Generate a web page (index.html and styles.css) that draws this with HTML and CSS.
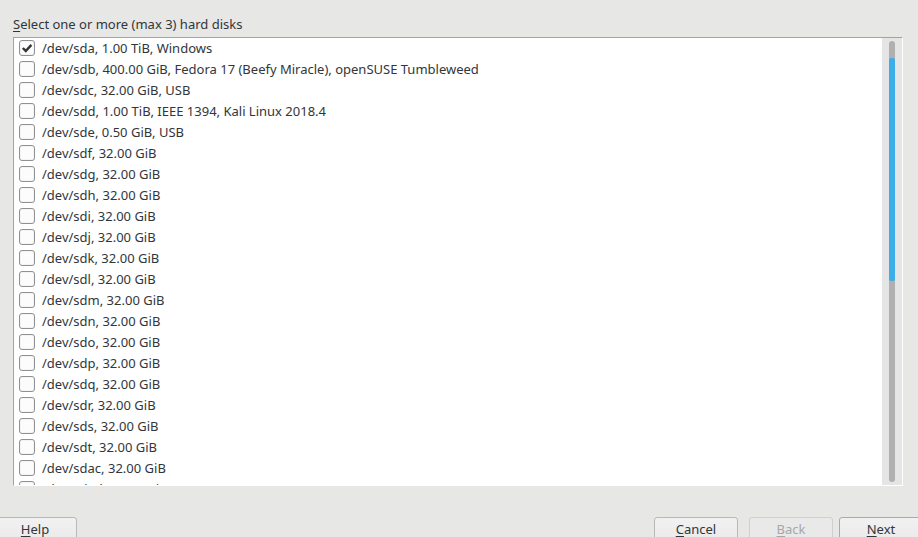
FILE: index.html
```html
<!DOCTYPE html>
<html>
<head>
<meta charset="utf-8">
<link rel="stylesheet" href="styles.css">
</head>
<body>
<div class="page">
  <div class="label"><u>S</u>elect one or more (max 3) hard disks</div>
  <div class="listbox">
    <div class="list">
      <div class="row"><span class="cb checked"><svg viewBox="0 0 16 16" width="16" height="16"><path d="M3.2 8.0 L6.6 11.4 L13 4.4" fill="none" stroke="#31363b" stroke-width="2.8"/></svg></span>/dev/sda, 1.00 TiB, Windows</div>
      <div class="row"><span class="cb"></span>/dev/sdb, 400.00 GiB, Fedora 17 (Beefy Miracle), openSUSE Tumbleweed</div>
      <div class="row"><span class="cb"></span>/dev/sdc, 32.00 GiB, USB</div>
      <div class="row"><span class="cb"></span>/dev/sdd, 1.00 TiB, IEEE 1394, Kali Linux 2018.4</div>
      <div class="row"><span class="cb"></span>/dev/sde, 0.50 GiB, USB</div>
      <div class="row"><span class="cb"></span>/dev/sdf, 32.00 GiB</div>
      <div class="row"><span class="cb"></span>/dev/sdg, 32.00 GiB</div>
      <div class="row"><span class="cb"></span>/dev/sdh, 32.00 GiB</div>
      <div class="row"><span class="cb"></span>/dev/sdi, 32.00 GiB</div>
      <div class="row"><span class="cb"></span>/dev/sdj, 32.00 GiB</div>
      <div class="row"><span class="cb"></span>/dev/sdk, 32.00 GiB</div>
      <div class="row"><span class="cb"></span>/dev/sdl, 32.00 GiB</div>
      <div class="row"><span class="cb"></span>/dev/sdm, 32.00 GiB</div>
      <div class="row"><span class="cb"></span>/dev/sdn, 32.00 GiB</div>
      <div class="row"><span class="cb"></span>/dev/sdo, 32.00 GiB</div>
      <div class="row"><span class="cb"></span>/dev/sdp, 32.00 GiB</div>
      <div class="row"><span class="cb"></span>/dev/sdq, 32.00 GiB</div>
      <div class="row"><span class="cb"></span>/dev/sdr, 32.00 GiB</div>
      <div class="row"><span class="cb"></span>/dev/sds, 32.00 GiB</div>
      <div class="row"><span class="cb"></span>/dev/sdt, 32.00 GiB</div>
      <div class="row"><span class="cb"></span>/dev/sdac, 32.00 GiB</div>
      <div class="row"><span class="cb"></span>/dev/sdad, 32.00 GiB</div>
    </div>
    <div class="scrollbar">
      <div class="track">
        <div class="handle"></div>
      </div>
    </div>
  </div>
  <div class="buttons">
    <button class="btn help"><u>H</u>elp</button>
    <div class="spacer"></div>
    <button class="btn cancel"><u>C</u>ancel</button>
    <button class="btn back" disabled><u>B</u>ack</button>
    <button class="btn next"><u>N</u>ext</button>
  </div>
</div>
</body>
</html>
```
FILE: styles.css
```css
html, body {
  margin: 0;
  padding: 0;
  background: #e7e7e6;
  overflow: hidden;
}
body {
  width: 918px;
  height: 537px;
  font-family: "Noto Sans", "DejaVu Sans", sans-serif;
  font-size: 13px;
  color: #31363b;
}
.page {
  display: flex;
  flex-direction: column;
  height: 537px;
  padding: 14px 0 0 13px;
  box-sizing: border-box;
  overflow: hidden;
}
.label {
  height: 20px;
  line-height: 20px;
  margin-bottom: 3px;
  flex: none;
}
.label u {
  text-decoration-thickness: 1px;
  text-underline-offset: 2px;
}
.listbox {
  width: 890px;
  height: 449px;
  flex: none;
  box-sizing: border-box;
  border-top: 1px solid #a3a3a3;
  border-left: 1px solid #a3a3a3;
  border-right: 1px solid #ffffff;
  border-bottom: 1px solid #ffffff;
  display: flex;
  background: #ffffff;
  overflow: hidden;
}
.list {
  flex: 1;
  margin-top: -1px;
  overflow: hidden;
}
.row {
  height: 21px;
  display: flex;
  align-items: center;
  white-space: nowrap;
}
.cb {
  width: 14px;
  height: 14px;
  border: 1px solid #8f9193;
  border-radius: 3px;
  background: #fcfcfc;
  margin-left: 5px;
  margin-right: 7px;
  flex: none;
  display: flex;
  align-items: center;
  justify-content: center;
  box-shadow: inset 0 0 0 1px #f4f4f4;
}
.cb svg {
  display: block;
}
.scrollbar {
  width: 20px;
  flex: none;
  background: #e5e5e5;
  position: relative;
}
.track {
  position: absolute;
  left: 7px;
  top: 3px;
  width: 6px;
  height: 441px;
  border-radius: 3px;
  background: #b0b0b0;
}
.handle {
  position: absolute;
  left: 0;
  top: 17px;
  width: 6px;
  height: 223px;
  border-radius: 2px;
  background: #3daee9;
}
.buttons {
  margin-top: 31px;
  margin-left: -13px;
  display: flex;
  align-items: flex-start;
  flex: none;
}
.spacer {
  flex: 1;
}
.btn {
  font-family: "Noto Sans", "DejaVu Sans", sans-serif;
  font-size: 13px;
  color: #31363b;
  height: 30px;
  width: 84px;
  box-sizing: border-box;
  border: 1px solid #b8b9ba;
  border-radius: 3px;
  background: linear-gradient(#f1f1f1, #e9e9e9);
  line-height: 20px;
  padding: 1px 0 8px;
}
.btn u {
  text-underline-offset: 2px;
}
.help {
  margin-left: -7px;
}
.cancel {
  margin-right: 11px;
}
.back {
  color: #a6a7a8;
  border-color: #cfd0d0;
  background: #e9e9e9;
  margin-right: 6px;
}
.next {
  margin-right: -5px;
  border-color: #a9aaab;
}
```
